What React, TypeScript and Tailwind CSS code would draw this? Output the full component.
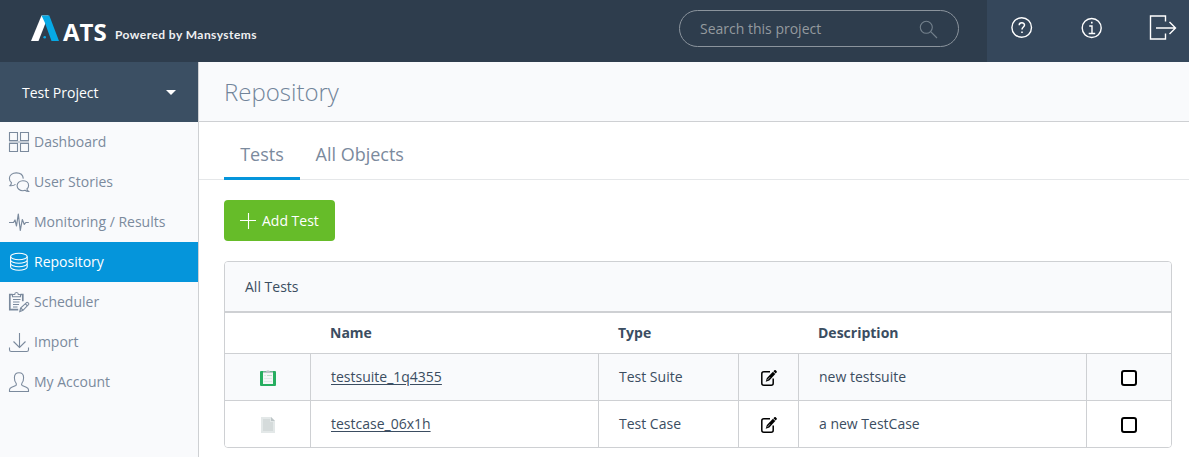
import type { ReactNode } from "react";

function Stroke({ children, size = 20, className = "" }: { children: ReactNode; size?: number; className?: string }) {
  return (
    <svg width={size} height={size} viewBox={`0 0 ${size} ${size}`} fill="none" stroke="currentColor" strokeWidth="1.1" className={`shrink-0 ${className}`}>
      {children}
    </svg>
  );
}

const DashboardIcon = () => (
  <Stroke size={22}>
    <path d="M1.500 1.500h8v8h-8zM12.500 1.500h8v8h-8zM1.500 12.500h8v8h-8zM12.500 12.500h8v8h-8z" />
    <path d="M1 11h20" opacity="0.4" strokeWidth="2" />
  </Stroke>
);

const StoriesIcon = () => (
  <Stroke size={22}>
    <path d="M7.500 13.400c-1.700 1.400-3.500 1.500-5.500 1.300 1-.9 1.500-2 1.400-3.200C1.800 10.400 1.400 9 1.400 7.200 1.400 4 4.500 1.900 8.300 1.900c3.700 0 6.700 2 7 5.700" />
    <path d="M18.900 17.900c1.200-1 1.700-2.200 1.700-3.500 0-2.800-2.500-4.700-5.700-4.700s-5.800 2.100-5.800 5 2.600 5 5.800 5c.8 0 1.500-.1 2.100-.4 1.100.9 2.100 1.200 3.600 1.200-.9-.8-1.500-1.500-1.700-2.600z" />
  </Stroke>
);

const PulseIcon = () => (
  <Stroke size={22}>
    <path d="M1 11.500h4.500l1.500-2.500 1.500 6L10.300 3l2 16.500 2-11 2 5 1.500-2h3" strokeWidth="1.200" strokeLinejoin="round" />
  </Stroke>
);

const DatabaseIcon = () => (
  <Stroke size={22}>
    <ellipse cx="10.900" cy="5.500" rx="8.300" ry="3.300" />
    <path d="M2.600 5.500v10.500c0 1.800 3.700 3.300 8.300 3.300s8.300-1.500 8.300-3.300V5.500M2.600 9c0 1.800 3.700 3.300 8.300 3.300s8.300-1.500 8.300-3.300M2.600 12.500c0 1.800 3.700 3.300 8.300 3.300s8.300-1.500 8.300-3.300" />
  </Stroke>
);

const SchedulerIcon = () => (
  <Stroke size={22}>
    <path d="M4.500 3.500H1.800V18.700h8.400M12.500 3.500h2.300v6.700" strokeWidth="1.700" />
    <path d="M4.500 5.700V3.500h2.200c0-2.600 3.600-2.600 3.600 0h2.200v2.200zM5 8.500h7.500M5 11h6.500M5 13.500h6M5 16h4.500" />
    <path d="M11.800 20.500l.8-3.400 6.200-5.800c.6-.5 2.500 1.300 1.900 2l-5.700 6zM12.800 17l2.300 2.400M17.300 12.700l2 2.200" />
  </Stroke>
);

const ImportIcon = () => (
  <Stroke size={22}>
    <path d="M11.500 2v15M5.500 10.500l6 6 6-6M1.500 16.500v2.200c0 1 .7 1.800 1.800 1.800h15.400c1.100 0 1.800-.8 1.800-1.800v-2.200" />
  </Stroke>
);

const AccountIcon = () => (
  <Stroke size={22}>
    <path d="M1.500 20.500v-1.700c0-1.500.8-2 2.200-2.600l4.100-1.700c.7-.4.600-1.800.2-2.500-1.200-1.400-1.600-2.700-1.600-5.200 0-3.500 1.800-5 4.600-5s4.600 1.500 4.600 5c0 2.500-.4 3.800-1.600 5.200-.4.700-.5 2.100.2 2.500l4.100 1.700c1.400.6 2.200 1.100 2.200 2.600v1.700z" />
  </Stroke>
);

const navItems = [
  { label: "Dashboard", icon: <DashboardIcon /> },
  { label: "User Stories", icon: <StoriesIcon /> },
  { label: "Monitoring / Results", icon: <PulseIcon /> },
  { label: "Repository", icon: <DatabaseIcon />, active: true },
  { label: "Scheduler", icon: <SchedulerIcon /> },
  { label: "Import", icon: <ImportIcon /> },
  { label: "My Account", icon: <AccountIcon /> },
];

const SuiteIcon = () => (
  <svg width="16" height="16" viewBox="0 0 16 16">
    <rect y="1" width="16" height="15" rx="1" fill="#27ae60" />
    <path d="M3 2h10v12H3z" fill="#f4f6f6" />
    <path d="M3 1.500h3C6 0 10 0 10 1.500h3V3H3z" fill="#bdc3c7" />
    <path d="M7 5.500h5" stroke="#b9dfc8" />
    <path d="M4 5.500h2" stroke="#dfe8e3" />
    <path d="M4 8.500h8M4 11.500h8" stroke="#e2e7e8" />
  </svg>
);

const CaseIcon = () => (
  <svg width="14" height="16" viewBox="0 0 14 16">
    <path d="M0 0h10l4 4v12H0z" fill="#e3e8e8" />
    <path d="M2 2h7v3h3v9H2z" fill="#d5dbdb" />
    <path d="M10 0v4h4z" fill="#bdc5c7" />
  </svg>
);

const EditIcon = () => (
  <svg width="16" height="16" viewBox="0 0 16 16" fill="none" stroke="#000">
    <path d="M9 1.800H2.800C1.500 1.800.8 2.500.8 3.800v9.400c0 1.300.7 2 2 2h7.400c1.300 0 2-.7 2-2V8.500" strokeWidth="1.500" />
    <path d="M4.700 11.800l1.200-3.900 6-6.200 2.400 2.400-6 6.300z" fill="#000" stroke="none" />
    <path d="M12.400 1.200l1-.9c.5-.4 1-.3 1.500.1l.6.6c.5.500.5 1 .1 1.500l-.9.900z" fill="#000" stroke="none" />
    <path d="M6.200 10.200l2.800-3" stroke="#fff" strokeWidth=".6" />
  </svg>
);

const rows = [
  { name: "testsuite_1q4355", type: "Test Suite", description: "new testsuite", icon: <SuiteIcon /> },
  { name: "testcase_06x1h", type: "Test Case", description: "a new TestCase", icon: <CaseIcon /> },
];

function Header() {
  return (
    <header className="flex h-[62px] bg-[#2e3d4d] text-white">
      <div className="flex flex-1 items-start pl-[31px] pt-[15px]">
        <svg width="28" height="26" viewBox="0 0 28 26" className="shrink-0">
          <path d="M10.500 .5h7L7.500 26H0z" fill="#fff" />
          <path d="M10.500 .5h7.800L28 26h-7.500L13.800 7.500z" fill="#06a9e6" />
          <circle cx="13.700" cy="22.200" r="1.300" fill="#06a9e6" />
        </svg>
        <span className="ml-[4px] mt-[4px] w-[52px] font-['Open_Sans',sans-serif] text-[24px] font-bold leading-[25px]">ATS</span>
        <span className="mt-[12px] whitespace-nowrap font-['Lato',sans-serif] text-[12px] font-bold leading-[16px] tracking-[0.440px] text-[#eef0f2]">
          Powered by Mansystems
        </span>
      </div>
      <div className="mr-[28px] mt-[10px] flex h-[37px] w-[280px] items-center justify-between rounded-full border border-[#8b949d] pl-5 pr-[20px]">
        <span className="text-[#949a9f]">Search this project</span>
        <Stroke size={19} className="mt-[2px] text-[#73808c]">
          <circle cx="7.300" cy="7.300" r="6" />
          <path d="M11.700 11.700l6.300 6.300" />
        </Stroke>
      </div>
      <div className="flex w-[202px] items-start bg-[#35475b]">
        <Stroke size={22} className="ml-[24px] mt-[17px]">
          <circle cx="10.700" cy="10.500" r="9.800" strokeWidth="1.400" />
          <path d="M8.200 8.300c0-3.300 5.300-3.300 5.300-.3 0 2-2.500 2-2.500 4.500" strokeWidth="1.500" />
          <path d="M10.200 15.200h1.600" strokeWidth="1.600" />
        </Stroke>
        <Stroke size={22} className="ml-[48px] mt-[17px]">
          <circle cx="10.700" cy="11" r="9.500" strokeWidth="1.400" />
          <path d="M8.200 9h2.800v7M7.700 16.500h6.500" strokeWidth="1.400" />
          <path d="M10 5.700h1.600" strokeWidth="1.700" />
        </Stroke>
        <Stroke size={28} className="ml-[46px] mt-[14px]">
          <path d="M16.500 7.500v-5.500h-15v23h15V19.500M7 14h19M20.500 8l6 6-6 6" strokeWidth="1.400" />
        </Stroke>
      </div>
    </header>
  );
}

function Sidebar() {
  return (
    <aside className="w-[199px] shrink-0 border-r border-[#ced0d3] bg-[#f9fafc]">
      <button className="flex h-[60px] w-full items-center justify-between bg-[#3b4f63] pl-[22px] pr-[22px] text-white">
        <span className="pt-[2px]">Test Project</span>
        <svg width="10" height="5" viewBox="0 0 10 5" fill="#fff"><path d="M0 0h10L5 5z" /></svg>
      </button>
      <nav>
        {navItems.map((item) => (
          <a key={item.label} className={`flex h-10 items-center gap-1 pl-2 ${item.active ? "bg-[#0595db] text-white" : "text-[#7b8a9d]"}`}>
            {item.icon}
            <span>{item.label}</span>
          </a>
        ))}
      </nav>
    </aside>
  );
}

function TestsTable() {
  return (
    <section className="mt-5 w-[948px] overflow-hidden rounded-[4px] border border-[#ced0d3]">
      <div className="flex h-[51px] items-center border-b-2 border-[#ced0d3] bg-[#f9fafc] pl-5 pt-px">All Tests</div>
      <div className="grid h-10 grid-cols-[85px_288px_140px_60px_288px_1fr] items-center font-bold">
        <span className="col-start-2 pl-5">Name</span>
        <span className="pl-5">Type</span>
        <span className="col-start-5 pl-5">Description</span>
      </div>
      {rows.map((row, index) => (
        <div
          key={row.name}
          className={`grid h-[47px] grid-cols-[86px_288px_140px_60px_288px_1fr] divide-x divide-[#ced0d3] border-t border-[#ced0d3] ${index % 2 === 0 ? "bg-[#f9fafc]" : "bg-white"}`}
        >
          <div className="flex items-center justify-center pl-px pt-[2px]">{row.icon}</div>
          <div className="flex items-center pl-5">
            <a className="underline underline-offset-2">{row.name}</a>
          </div>
          <div className="flex items-center pl-5">{row.type}</div>
          <div className="flex items-center justify-center pl-px pt-[2px]"><EditIcon /></div>
          <div className="flex items-center pl-5">{row.description}</div>
          <div className="flex items-center pl-[34px] pt-[2px]">
            <span className="size-4 rounded-[3px] border-2 border-black bg-white" />
          </div>
        </div>
      ))}
    </section>
  );
}

export default function App() {
  return (
    <div className="h-[457px] w-[1189px] overflow-hidden bg-white font-['Open_Sans',sans-serif] text-[14px] leading-5 text-[#3b4d61]">
      <Header />
      <div className="flex h-[395px]">
        <Sidebar />
        <main className="flex-1">
          <div className="flex h-[60px] items-center border-b border-[#ced0d3] bg-[#f9fafc] pl-[25px]">
            <h1 className="text-[24px] font-light leading-8 text-[#71849a]">Repository</h1>
          </div>
          <div className="flex h-[58px] items-stretch border-b border-[#e5e7e9] pl-[25px] text-[18px] text-[#7b8a9d]">
            <span className="-mb-px flex w-[76px] items-center justify-center border-b-3 border-[#0595db] pt-[9px]">Tests</span>
            <span className="flex items-center pl-[15.500px] pt-[7px]">All Objects</span>
          </div>
          <div className="pl-[25px] pt-5">
            <button className="flex h-[41px] w-[111px] items-center gap-[6px] rounded-[4px] bg-[#66bc29] pl-4 text-white">
              <Stroke size={16}><path d="M8.500 0v16M0 7.500h16" /></Stroke>
              Add Test
            </button>
            <TestsTable />
          </div>
        </main>
      </div>
    </div>
  );
}
